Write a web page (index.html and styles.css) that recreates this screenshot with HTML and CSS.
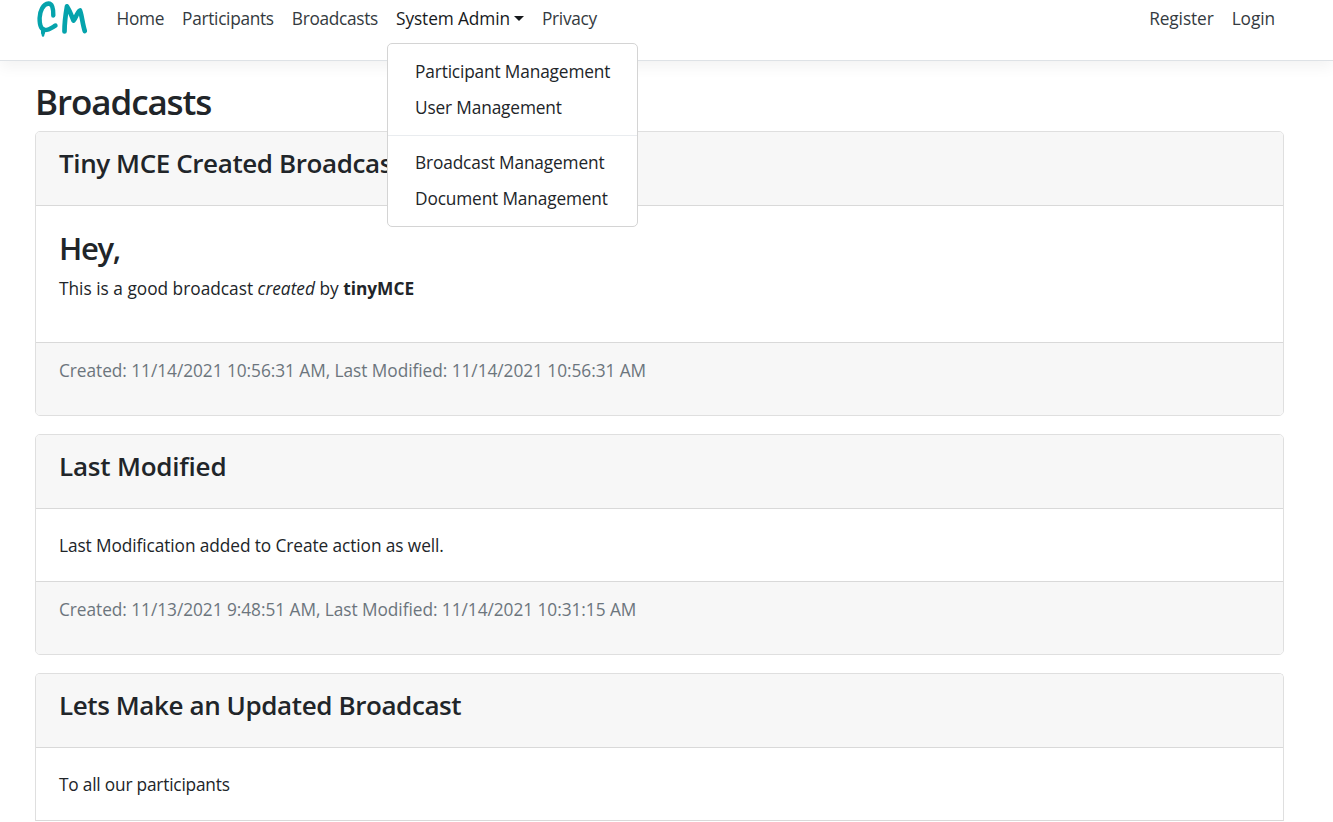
FILE: index.html
```html
<!DOCTYPE html>
<html lang="en">
<head>
<meta charset="utf-8">
<title>Broadcasts</title>
<link rel="stylesheet" href="styles.css">
</head>
<body>
<header class="navbar">
  <a class="brand" aria-label="CM">
    <svg width="54" height="40" viewBox="0 0 54 40" fill="none" stroke="#05a3ac" stroke-linecap="round" stroke-linejoin="round">
      <path stroke-width="4.400" d="M18.300 15.500C18.500 8 17 3.500 13.500 3.500C8 4 4.800 11 4.600 18C4.500 24 6 29.500 10 30C14 30 17 27.500 20.500 25.500"/>
      <path stroke-width="4" d="M8 29V33"/>
      <path stroke-width="2.500" d="M8 33V35.500"/>
      <path stroke-width="4.700" d="M32 6.500C30.500 15 29.500 23 29.500 31.500M32 6.500C35 11 36.500 16 38.500 20.500C41 18 42 12 45 10.500C47 16 47.500 24 49.800 31"/>
    </svg>
  </a>
  <nav class="links main">
    <a>Home</a>
    <a>Participants</a>
    <a>Broadcasts</a>
    <div class="dropdown">
      <a class="active">System Admin<span class="caret"></span></a>
      <div class="menu">
        <a>Participant Management</a>
        <a>User Management</a>
        <hr>
        <a>Broadcast Management</a>
        <a>Document Management</a>
      </div>
    </div>
    <a>Privacy</a>
  </nav>
  <nav class="links account">
    <a>Register</a>
    <a>Login</a>
  </nav>
</header>
<main class="page">
  <h1>Broadcasts</h1>
  <article class="card">
    <div class="card-header"><h3>Tiny MCE Created Broadcast</h3></div>
    <div class="card-body rich">
      <h2>Hey,</h2>
      <p>This is a good broadcast <em>created</em> by <strong>tinyMCE</strong></p>
    </div>
    <div class="card-footer">Created: 11/14/2021 10:56:31 AM, Last Modified: 11/14/2021 10:56:31 AM</div>
  </article>
  <article class="card">
    <div class="card-header"><h3 class="loose">Last Modified</h3></div>
    <div class="card-body"><p>Last Modification added to Create action as well.</p></div>
    <div class="card-footer">Created: 11/13/2021 9:48:51 AM, Last Modified: 11/14/2021 10:31:15 AM</div>
  </article>
  <article class="card open">
    <div class="card-header"><h3>Lets Make an Updated Broadcast</h3></div>
    <div class="card-body"><p class="tight">To all our participants</p></div>
  </article>
</main>
</body>
</html>
```
FILE: styles.css
```css
* { box-sizing: border-box; }
body {
  margin: 0;
  background: #fff;
  color: #212529;
  font: 400 17.3px/27px "Segoe UI", "Open Sans", "Noto Sans", sans-serif;
  letter-spacing: -0.09px;
}
h1, h2, h3, p { margin: 0; }
h1, h2, h3 { font-weight: 600; }
strong { font-weight: 700; }
.navbar {
  display: flex;
  align-items: flex-start;
  height: 61px;
  padding: 0 58px 0 35px;
  border-bottom: 1px solid #dee2e6;
  box-shadow: 0 6px 14px rgba(0, 0, 0, .05);
}
.brand { width: 81.5px; height: 40px; }
.brand svg { display: block; }
.links { display: flex; gap: 18px; padding-top: 5px; color: #343a40; }
.links a { display: block; white-space: nowrap; }
.main { letter-spacing: -0.31px; }
.account { margin-left: auto; }
.dropdown { position: relative; }
.links .active { color: #16191c; letter-spacing: -0.1px; }
.caret {
  display: inline-block;
  margin-left: 4px;
  vertical-align: 4px;
  border: 5.5px solid transparent;
  border-top-color: currentColor;
  border-bottom: 0;
}
.menu {
  position: absolute;
  z-index: 2;
  top: 38px;
  left: -9px;
  width: 251px;
  height: 184px;
  padding: 9px 0;
  background: #fff;
  border: 1px solid #d4d4d4;
  border-radius: 5px;
  color: #212529;
  letter-spacing: -0.15px;
}
.menu a { height: 36px; padding: 5px 27px; }
.menu hr { margin: 10px 0 8px; border: 0; border-top: 1px solid #e9ecef; }
.page { padding: 20px 49px 0 35px; }
h1 { height: 50px; font-size: 35px; line-height: 42px; letter-spacing: -1.1px; }
.card {
  margin-bottom: 18px;
  border: 1px solid #dfdfdf;
  border-radius: 5px;
  background: #fff;
  overflow: hidden;
}
.card-header { height: 74px; padding: 14px 23px; background: #f7f7f7; border-bottom: 1px solid #d9d9d9; }
h3 { font-size: 26px; line-height: 34px; letter-spacing: -0.4px; }
.loose { letter-spacing: -0.2px; }
.tight { letter-spacing: -0.2px; }
.card-body { height: 72px; padding: 23px; }
.rich { height: 136px; letter-spacing: 0; }
h2 { font-size: 31px; line-height: 38px; margin-bottom: 8px; letter-spacing: -1.3px; }
.card-footer { height: 73px; padding: 14px 23px; background: #f7f7f7; border-top: 1px solid #d9d9d9; color: #6c757d; letter-spacing: -0.05px; }
.open { margin-bottom: 0; border-bottom-color: #d9d9d9; border-radius: 5px 5px 0 0; }
```
